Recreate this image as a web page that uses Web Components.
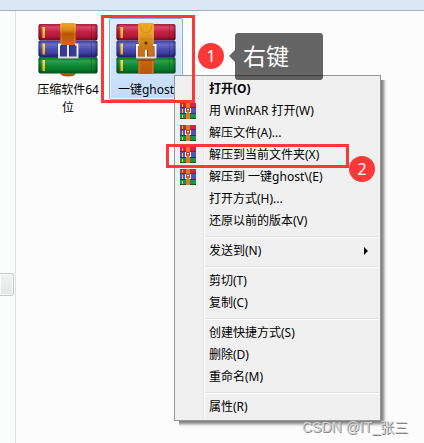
<!DOCTYPE html>
<html lang="zh-CN">
<head>
<meta charset="utf-8">
<title>右键解压</title>
<style>
* {
  box-sizing: border-box;
}

body {
  margin: 0;
  font: 12px/18px "Noto Sans", "Noto Sans CJK SC", sans-serif;
  color: #000;
}
</style>
</head>
<body>
<explorer-window>
  <file-item kind="closed">压缩软件64位</file-item>
  <file-item kind="open" selected>一键ghost</file-item>
  <context-menu slot="overlay">
    <menu-item primary>打开(O)</menu-item>
    <menu-item archive>用 WinRAR 打开(W)</menu-item>
    <menu-item archive>解压文件(A)...</menu-item>
    <menu-item archive>解压到当前文件夹(X)</menu-item>
    <menu-item archive>解压到 一键ghost\(E)</menu-item>
    <menu-item>打开方式(H)...</menu-item>
    <menu-item>还原以前的版本(V)</menu-item>
    <menu-line></menu-line>
    <menu-item submenu>发送到(N)</menu-item>
    <menu-line></menu-line>
    <menu-item>剪切(T)</menu-item>
    <menu-item>复制(C)</menu-item>
    <menu-line></menu-line>
    <menu-item>创建快捷方式(S)</menu-item>
    <menu-item>删除(D)</menu-item>
    <menu-item>重命名(M)</menu-item>
    <menu-line></menu-line>
    <menu-item>属性(R)</menu-item>
  </context-menu>
  <mark-frame slot="overlay" style="left: 101px; top: 15px; width: 94px; height: 88px"></mark-frame>
  <mark-frame slot="overlay" style="left: 166px; top: 144px; width: 183px; height: 24px"></mark-frame>
  <step-badge slot="overlay" style="left: 198px; top: 43px">1</step-badge>
  <step-badge slot="overlay" style="left: 349px; top: 156px">2</step-badge>
  <tip-bubble slot="overlay" style="left: 235px; top: 33px">右键</tip-bubble>
  <water-mark slot="overlay">CSDN @IT_张三</water-mark>
</explorer-window>

<script>
// three stacked books, shared by both file icons
const gradients = `
<defs>
  <linearGradient id="red" x2="0" y2="1">
    <stop offset="0" stop-color="#a81c3c"/><stop offset=".2" stop-color="#d84868"/>
    <stop offset=".45" stop-color="#c92249"/><stop offset=".75" stop-color="#b0183a"/><stop offset="1" stop-color="#6d0a22"/>
  </linearGradient>
  <linearGradient id="blue" x2="0" y2="1">
    <stop offset="0" stop-color="#3c3e94"/><stop offset=".25" stop-color="#6a6cc8"/>
    <stop offset=".5" stop-color="#4f50b8"/><stop offset=".75" stop-color="#3e3fa0"/><stop offset="1" stop-color="#20215e"/>
  </linearGradient>
  <linearGradient id="green" x2="0" y2="1">
    <stop offset="0" stop-color="#0a6a2a"/><stop offset=".25" stop-color="#2ba14e"/>
    <stop offset=".5" stop-color="#0f8a35"/><stop offset=".75" stop-color="#0a7a2c"/><stop offset="1" stop-color="#064c1c"/>
  </linearGradient>
  <linearGradient id="gold" x2="0" y2="1">
    <stop offset="0" stop-color="#ffe83c"/><stop offset="1" stop-color="#f5a01a"/>
  </linearGradient>
  <linearGradient id="closed" x2="0" y2="1">
    <stop offset="0" stop-color="#f0a428"/><stop offset=".3" stop-color="#dc8a1c"/>
    <stop offset=".5" stop-color="#b85408"/><stop offset="1" stop-color="#d06c10"/>
  </linearGradient>
  <linearGradient id="open" x2="0" y2="1">
    <stop offset="0" stop-color="#f0a81c"/><stop offset=".2" stop-color="#e6a028"/>
    <stop offset=".42" stop-color="#cc7c18"/><stop offset=".65" stop-color="#c86c14"/><stop offset="1" stop-color="#b4580c"/>
  </linearGradient>
  <linearGradient id="steel" gradientUnits="userSpaceOnUse" x1="0" y1="21" x2="0" y2="37">
    <stop offset="0" stop-color="#fff"/><stop offset="1" stop-color="#d4d8de"/>
  </linearGradient>
  <linearGradient id="ends">
    <stop offset="0" stop-color="#000" stop-opacity=".45"/><stop offset=".05" stop-color="#000" stop-opacity="0"/>
    <stop offset=".94" stop-color="#000" stop-opacity="0"/><stop offset="1" stop-color="#000" stop-opacity=".4"/>
  </linearGradient>
</defs>`

const book = (y, fill) => `
<rect x="0.5" y="${y}" width="59" height="16.5" rx="2" fill="url(#${fill})"/>
<rect x="0.5" y="${y}" width="59" height="16.5" rx="2" fill="url(#ends)"/>
<rect x="4.5" y="${y + 3}" width="2.5" height="11" fill="url(#gold)"/>
<path d="M53.5 ${y + 1}v14.5" stroke="#000" stroke-opacity=".2"/>`

const books = book(2, "red") + book(18.5, "blue") + book(35, "green")

const closedBelt = `
<path d="M22 51h16q-1 3.5-8 3.5t-8-3.5z" fill="#b4500e"/>
<path d="M22 3q0-2 2-2h12q2 0 2 2v20H22z" fill="url(#closed)"/>
<path d="M23.5 3v19M36.5 3v19" stroke="#f0b45a" stroke-opacity=".3"/>
<path d="M21 23h18v13H21z" fill="#383a98"/>
<path d="M23 22.5h-2v13.500h18.500V22.500H37" fill="none" stroke="#333" stroke-opacity=".4" stroke-width="3"/>
<path d="M23 22.500h-2v13h18.500v-13H37" fill="none" stroke="url(#steel)" stroke-width="2"/>
<path d="M31.500 24v10" stroke="#15164a" stroke-opacity=".5"/>
<path d="M30 23v12" stroke="#e8eaf0" stroke-width="2"/>`

const openBelt = `
<path d="M22 3q0-2 2-2h12q2 0 2 2v48q-8 2-16 0z" fill="url(#open)"/>
<path d="M22 37h16v2H22z" fill="#6b3307" fill-opacity=".5"/>
<path d="M23.500 4v18M36.500 4v18M23.500 39v12M36.500 39v12" stroke="#f5c060" stroke-opacity=".25"/>
<path d="M24 3q1 8 6 8t6-8" fill="none" stroke="#b87414" stroke-opacity=".4"/>
<path d="M22 17h16" stroke="#8c4b0d" stroke-opacity=".2"/>
<circle cx="30" cy="21" r="1.500" fill="#5e2c06"/>
<path d="M23 23h-2v12.500h18.500V23H37" fill="none" stroke="#333" stroke-opacity=".35" stroke-width="3"/>
<path d="M23 23h-2v12.500h18.500V23H37" fill="none" stroke="url(#steel)" stroke-width="2"/>
<path d="M31.500 28v6" stroke="#5e2c06" stroke-opacity=".6"/>
<path d="M30 28v7" stroke="#fff" stroke-width="2"/>`

const bigIcon = (belt) => `<svg width="60" height="56" viewBox="0 0 60 56" aria-hidden="true">${gradients}${books}${belt}</svg>`

const smallIcon = `
<svg width="16" height="16" viewBox="0 0 16 16" shape-rendering="crispEdges" aria-hidden="true">
  <path d="M0 0h16v5H0z" fill="#c8284d"/><path d="M0 4h16v1H0z" fill="#8c1838"/>
  <path d="M0 5h16v6H0z" fill="#5054b8"/><path d="M0 10h16v1H0z" fill="#2c2e78"/>
  <path d="M0 11h16v5H0z" fill="#189443"/><path d="M0 15h16v1H0z" fill="#0a5a25"/>
  <path d="M2 1h1v3H2zM2 6h1v4H2zM2 12h1v3H2z" fill="#ffc928"/>
  <path d="M6 0h4v16H6z" fill="#ee7420"/>
  <path d="M6 5h4v5H6z" fill="#a84030"/>
  <path d="M5 5h1v5H5zM10 5h1v5h-1zM7 6h2v1H7zM6 9h1v1H6zM9 9h1v1H9z" fill="#fff"/>
  <path d="M7 7h2v3H7z" fill="#e8602c"/>
</svg>`

class BaseElement extends HTMLElement {
  constructor() {
    super()
    this._shadowRoot = this.attachShadow({ mode: "open" })
  }

  connectedCallback() {
    this._shadowRoot.innerHTML = this.render()
  }
}

class ExplorerWindow extends BaseElement {
  render() {
    return `
    <style>
    * { box-sizing: border-box; }
    :host {
      display: grid;
      grid-template: 11px 1fr / 16px 1fr;
      position: relative;
      min-height: 100vh;
      background: #fcfcfc;
    }
    header {
      grid-column: 1 / -1;
      background: #dce7f4;
      border-bottom: 1px solid #a0afc3;
    }
    aside {
      display: flex;
      align-items: flex-start;
      border-right: 1px solid #d6e3f5;
      padding-top: 262px;
    }
    .handle {
      width: 14px;
      height: 23px;
      border: 1px solid #c9c9c9;
      border-left: 0;
      border-radius: 0 3px 3px 0;
      background: linear-gradient(#f4f4f4, #e4e4e4);
      box-shadow: inset 0 0 0 1px #fafafa;
    }
    main {
      display: flex;
      align-items: flex-start;
      gap: 4px;
      padding: 7px 15px;
    }
    </style>
    <header></header>
    <aside><div class="handle"></div></aside>
    <main><slot></slot></main>
    <slot name="overlay"></slot>`
  }
}

class FileItem extends BaseElement {
  render() {
    const belt = this.getAttribute("kind") === "open" ? openBelt : closedBelt
    return `
    <style>
    :host {
      box-sizing: border-box;
      display: flex;
      flex-direction: column;
      align-items: center;
      gap: 3px;
      width: 74px;
      padding: 3px 4px 0;
      border: 1px solid transparent;
      border-radius: 2px;
      text-align: center;
    }
    :host([selected]) {
      border-color: #84acdd;
      background: linear-gradient(#e0ecfb, #c2dbfb);
      box-shadow: inset 0 0 0 1px #eaf3fd;
    }
    svg { display: block; flex: none; }
    span { word-break: break-all; }
    </style>
    ${bigIcon(belt)}
    <span><slot></slot></span>`
  }
}

class ContextMenu extends BaseElement {
  connectedCallback() {
    super.connectedCallback()
    this.setAttribute("role", "menu")
  }

  render() {
    return `
    <style>
    :host {
      box-sizing: border-box;
      position: absolute;
      left: 174px;
      top: 75px;
      width: 207px;
      padding: 2px;
      border: 1px solid #979797;
      background: linear-gradient(90deg, transparent 26px, #e2e3e3 26px 27px, #fff 27px 28px, transparent 28px) 2px 2px / calc(100% - 4px) calc(100% - 4px) no-repeat #f0f0f0;
      box-shadow: 2px 2px 3px 1px rgba(0, 0, 0, 0.5);
      clip-path: polygon(0 0, 100% 0, 100% 5px, calc(100% + 6px) 5px, calc(100% + 6px) calc(100% + 6px), 5px calc(100% + 6px), 5px 100%, 0 100%);
    }
    </style>
    <slot></slot>`
  }
}

class MenuItem extends BaseElement {
  render() {
    return `
    <style>
    :host { display: block; }
    button {
      display: grid;
      grid-template-columns: 16px 1fr auto;
      column-gap: 13px;
      align-items: center;
      width: 100%;
      height: 22px;
      margin: 0;
      padding: 0 10px 0 3px;
      border: 0;
      background: none;
      font: inherit;
      color: inherit;
      text-align: left;
      white-space: nowrap;
    }
    :host([primary]) button { font-weight: bold; }
    svg { display: block; }
    .icon { width: 16px; height: 16px; }
    </style>
    <button type="button" role="menuitem">
      <span class="icon">${this.hasAttribute("archive") ? smallIcon : ""}</span>
      <span><slot></slot></span>
      ${this.hasAttribute("submenu") ? `<svg width="4" height="8" viewBox="0 0 4 8" aria-hidden="true"><path d="M0 0l4 4-4 4z" fill="#000"/></svg>` : ""}
    </button>`
  }
}

class MenuLine extends BaseElement {
  render() {
    return `
    <style>
    :host {
      display: block;
      padding: 4px 0 2px 28px;
    }
    hr {
      margin: 0;
      border: 0;
      border-top: 1px solid #e0e0e0;
      border-bottom: 1px solid #fff;
    }
    </style>
    <hr>`
  }
}

class MarkFrame extends BaseElement {
  render() {
    return `
    <style>
    :host {
      box-sizing: border-box;
      position: absolute;
      border: 3px solid #fc3838;
      pointer-events: none;
    }
    </style>`
  }
}

class StepBadge extends BaseElement {
  render() {
    return `
    <style>
    :host {
      display: flex;
      align-items: center;
      justify-content: center;
      position: absolute;
      width: 26px;
      height: 26px;
      border-radius: 50%;
      background: #fc3838;
      color: #fff;
      font-size: 16px;
    }
    </style>
    <slot></slot>`
  }
}

class TipBubble extends BaseElement {
  render() {
    return `
    <style>
    :host {
      box-sizing: border-box;
      position: absolute;
      width: 88px;
      padding: 8px;
      border-radius: 3px;
      background: rgba(0, 0, 0, 0.6);
      color: #fff;
      font-size: 23px;
      line-height: 31px;
    }
    :host::before {
      content: "";
      position: absolute;
      right: 100%;
      top: 17px;
      border: solid transparent;
      border-width: 6px 6px 6px 0;
      border-right-color: rgba(0, 0, 0, 0.6);
    }
    </style>
    <slot></slot>`
  }
}

class WaterMark extends BaseElement {
  render() {
    return `
    <style>
    :host {
      position: absolute;
      right: 16px;
      bottom: 7px;
      font: 14px/18px "Liberation Sans", "Noto Sans CJK SC", sans-serif;
      color: #d2d2d2;
      text-shadow: 1px 1px 0 #888;
    }
    </style>
    <slot></slot>`
  }
}

window.customElements.define("explorer-window", ExplorerWindow)
window.customElements.define("file-item", FileItem)
window.customElements.define("context-menu", ContextMenu)
window.customElements.define("menu-item", MenuItem)
window.customElements.define("menu-line", MenuLine)
window.customElements.define("mark-frame", MarkFrame)
window.customElements.define("step-badge", StepBadge)
window.customElements.define("tip-bubble", TipBubble)
window.customElements.define("water-mark", WaterMark)
</script>
</body>
</html>
